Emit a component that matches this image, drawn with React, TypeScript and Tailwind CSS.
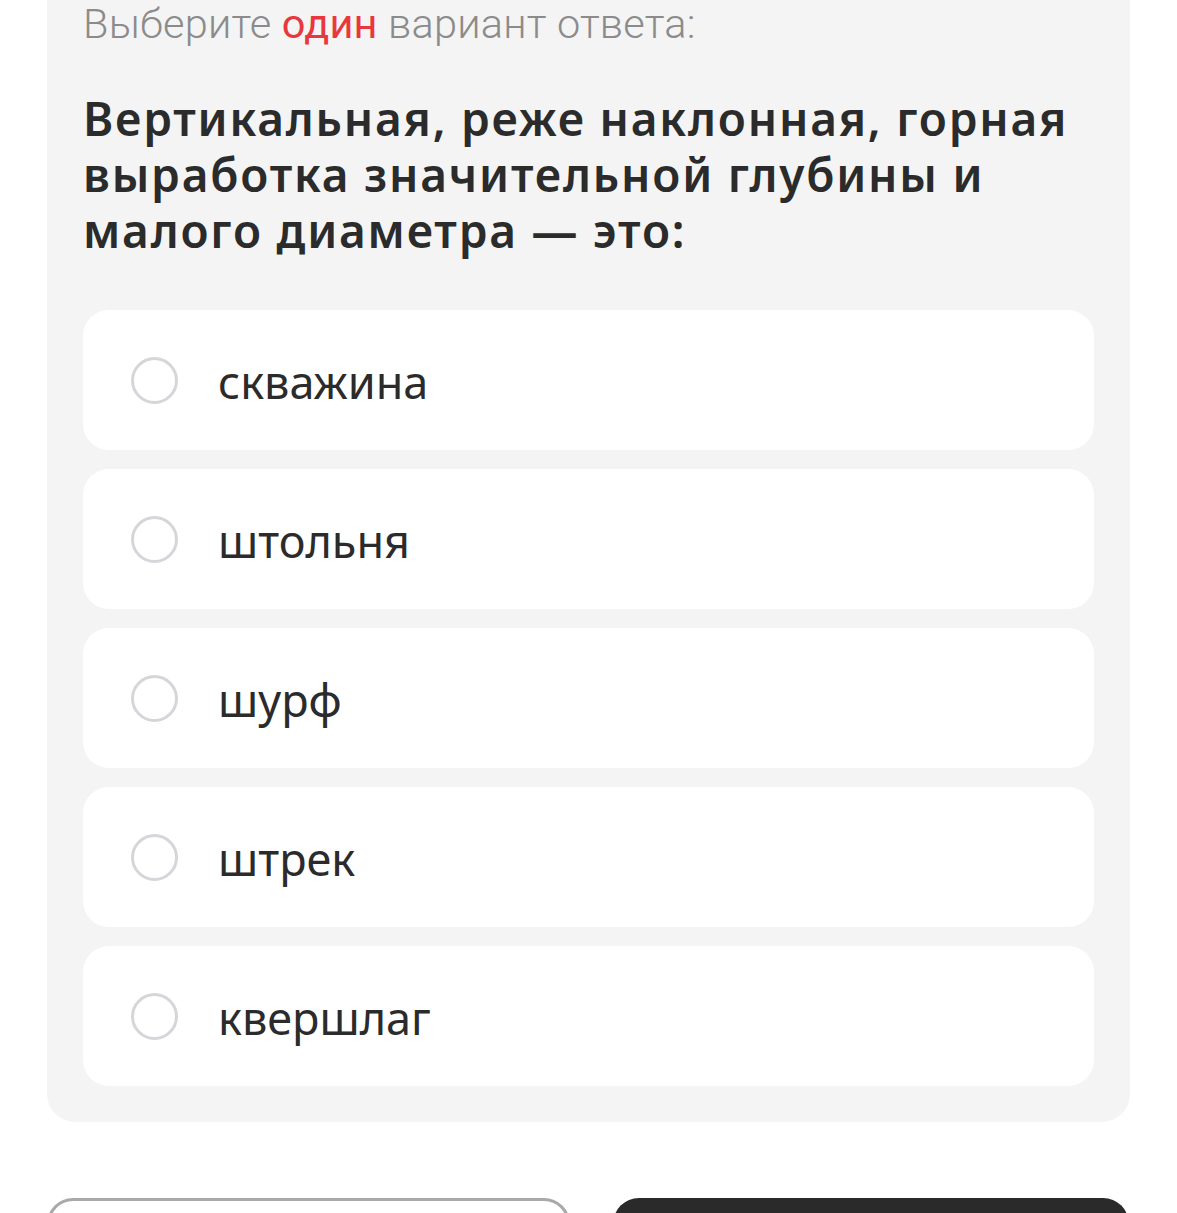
const options = ["скважина", "штольня", "шурф", "штрек", "квершлаг"];

function Radio() {
  return (
    <span className="w-[47px] h-[47px] shrink-0 rounded-full border-[3px] border-[#d6d6da] bg-white" />
  );
}

export default function App() {
  return (
    <div className="min-h-[1213px] bg-white px-[47px] overflow-hidden">
      <div className="bg-[#f4f4f4] rounded-b-[28px] px-[36px] pb-[36px]">
        <p
          className="text-[41.5px] leading-[48px] text-[#8b8b8b] tracking-[0.2px]"
          style={{ fontFamily: "Roboto, sans-serif", fontWeight: 300 }}
        >
          Выберите <span className="text-[#e8383d] font-normal">один</span> вариант ответа:
        </p>
        <h1
          className="mt-[42px] text-[46px] leading-[56px] font-semibold text-[#2b2b2b] tracking-[1.8px]"
          style={{ fontFamily: '"Noto Sans", sans-serif' }}
        >
          Вертикальная, реже наклонная, горная выработка значительной глубины и малого диаметра — это:
        </h1>
        <div className="mt-[52px] flex flex-col gap-[19px]">
          {options.map((o) => (
            <label
              key={o}
              className="h-[140px] bg-white rounded-[26px] flex items-center pl-[48px] gap-[40px]"
            >
              <Radio />
              <span
                className="text-[45px] text-[#2b2b2b] pt-[4px]"
                style={{ fontFamily: '"Noto Sans", sans-serif' }}
              >
                {o}
              </span>
            </label>
          ))}
        </div>
      </div>
      <div className="mt-[76px] grid grid-cols-[523px_516px] gap-[43px]">
        <button className="h-[100px] rounded-[26px] border-[3px] border-[#a9a9a9] bg-white" />
        <button className="h-[100px] rounded-[26px] bg-[#2a2a2a]" />
      </div>
    </div>
  );
}
